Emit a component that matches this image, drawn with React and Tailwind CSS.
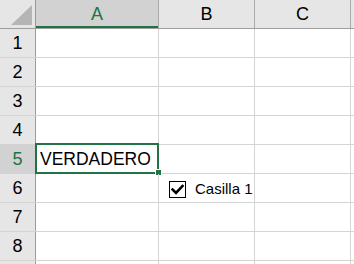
import React from "react";

const font = { fontFamily: '"Liberation Sans", Arial, sans-serif' };

function Corner() {
  return (
    <div className="w-[36px] h-[28px] border-r border-r-[#9b9b9b] bg-[#e6e6e6] relative shrink-0">
      <svg className="absolute left-0 top-0" width="35" height="28" viewBox="0 0 35 28">
        <polygon points="32,5 32,25 11,25" fill="#b5b5b5" />
      </svg>
    </div>
  );
}

function ColHeader({ label, w, selected }) {
  return (
    <div
      className={`${w} h-[28px] shrink-0 border-r border-r-[#ababab] flex items-center justify-center text-[18px] ${
        selected ? "bg-[#d2d2d2] text-[#217346]" : "bg-[#e6e6e6] text-black"
      } relative`}
    >
      {label}
      {selected && <div className="absolute left-0 right-0 bottom-0 h-[2px] bg-[#217346]" />}
    </div>
  );
}

export default function App() {
  const rows = [1, 2, 3, 4, 5, 6, 7, 8, 9];
  return (
    <div className="w-[354px] h-[264px] overflow-hidden bg-white relative" style={font}>
      <div className="flex border-b border-b-[#9e9e9e]">
        <Corner />
        <ColHeader label="A" w="w-[123px]" selected />
        <ColHeader label="B" w="w-[96px]" />
        <ColHeader label="C" w="w-[96px]" />
        <div className="flex-1 h-[28px] bg-[#e6e6e6]" />
      </div>
      {rows.map((r) => (
        <div key={r} className="flex h-[29px] border-b border-b-[#d4d4d4]">
          <div
            className={`w-[36px] shrink-0 border-r border-r-[#9b9b9b] flex items-center justify-center text-[18px] pt-[1px] ${
              r === 5 ? "bg-[#d2d2d2] text-[#217346]" : "bg-[#e6e6e6] text-black"
            }`}
          >
            {r < 9 ? r : ""}
          </div>
          <div className="w-[123px] shrink-0 border-r border-r-[#d4d4d4] relative flex items-end">
            {r === 5 && (
              <>
                <span className="pl-[4px] pb-[3px] text-[17.5px] leading-[22px] text-black">VERDADERO</span>
                <div className="absolute left-[-1px] top-[-2px] w-[124px] h-[31px] border-2 border-[#217346]" />
                <div className="absolute left-[119px] top-[24px] w-[7px] h-[7px] bg-[#217346] border border-white" />
              </>
            )}
          </div>
          <div className="w-[96px] shrink-0 border-r border-r-[#d4d4d4]" />
          <div className="w-[96px] shrink-0 border-r border-r-[#d4d4d4]" />
          <div className="flex-1" />
        </div>
      ))}
      <div className="absolute left-[169px] top-[180px] flex items-center gap-[9px]">
        <div className="w-[17px] h-[17px] border border-black bg-white flex items-center justify-center">
          <svg width="13" height="11" viewBox="0 0 13 11">
            <path d="M1.5 5.5 L5 9 L11.5 2" stroke="black" strokeWidth="2.6" fill="none" strokeLinecap="square" />
          </svg>
        </div>
        <span className="text-[15px] leading-[18px] text-black">Casilla 1</span>
      </div>
    </div>
  );
}
